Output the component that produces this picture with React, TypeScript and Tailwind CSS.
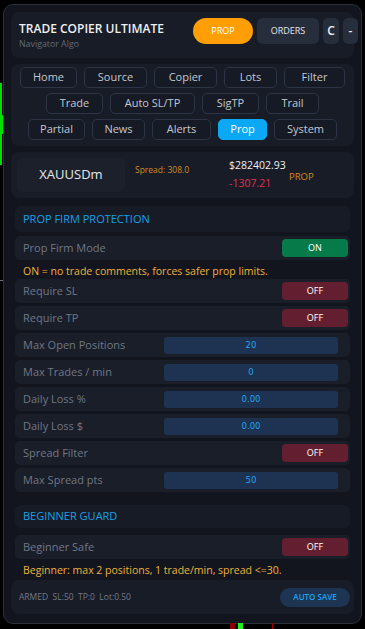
import React from "react";

type Tab = { label: string; w: string; active?: boolean };

const tabRows: Tab[][] = [
  [
    { label: "Home", w: "w-[57px]" },
    { label: "Source", w: "w-[63px]" },
    { label: "Copier", w: "w-[63px]" },
    { label: "Lots", w: "w-[53px]" },
    { label: "Filter", w: "w-[61px]" },
  ],
  [
    { label: "Trade", w: "w-[57px]" },
    { label: "Auto SL/TP", w: "w-[85px]" },
    { label: "SigTP", w: "w-[57px]" },
    { label: "Trail", w: "w-[53px]" },
  ],
  [
    { label: "Partial", w: "w-[57px]" },
    { label: "News", w: "w-[53px]" },
    { label: "Alerts", w: "w-[59px]" },
    { label: "Prop", w: "w-[49px]", active: true },
    { label: "System", w: "w-[63px]" },
  ],
];

function Toggle({ on }: { on: boolean }) {
  return (
    <div
      className={
        "flex h-[18px] w-[66px] items-center justify-center rounded-[4px] text-[9px] text-white " +
        (on ? "bg-[#077a4a]" : "bg-[#631f30]")
      }
    >
      {on ? "ON" : "OFF"}
    </div>
  );
}

function ToggleRow({ label, on }: { label: string; on: boolean }) {
  return (
    <div className="flex h-[24px] items-center justify-between rounded-[5px] bg-[#1a1e29] pl-[8px] pr-[2px]">
      <span className="text-[11px] text-[#6f7785]">{label}</span>
      <Toggle on={on} />
    </div>
  );
}

function InputRow({ label, value }: { label: string; value: string }) {
  return (
    <div className="flex h-[24px] items-center justify-between rounded-[5px] bg-[#1a1e29] pl-[8px] pr-[12px]">
      <span className="text-[11px] text-[#6f7785]">{label}</span>
      <div className="flex h-[17px] w-[174px] items-center justify-center rounded-[3px] bg-[#1e3251] font-['DejaVu_Sans',sans-serif] text-[8.5px] text-[#1fa3f0]">
        {value}
      </div>
    </div>
  );
}

function Note({ children }: { children: React.ReactNode }) {
  return (
    <div className="h-[13px] pl-[8px] text-[10.5px] leading-[17px] text-[#f0b13c]">{children}</div>
  );
}

export default function App() {
  return (
    <div className="relative h-[629px] w-[365px] overflow-hidden bg-black font-['Open_Sans',sans-serif]">
      {/* chart background fragments */}
      <div className="absolute left-0 top-[83px] h-[82px] w-[2px] bg-[#00e000]" />
      <div className="absolute left-0 top-[115px] h-[19px] w-[3px] bg-[#00e000]" />
      <div className="absolute left-0 top-[280px] h-[1px] w-[3px] bg-[#6b7280]" />
      <div className="absolute left-[230px] top-[623px] h-[6px] w-[5px] bg-[#8b0000]" />
      <div className="absolute left-[238px] top-[623px] h-[6px] w-[5px] bg-[#22ee22]" />
      <div className="absolute left-[272px] top-[623px] h-[6px] w-[1px] bg-[#a00000]" />

      <div className="ml-[3px] mt-[4px] flex h-[620px] w-[359px] flex-col rounded-[10px] border border-[#2a2f3a] bg-[#12151d] px-[7px] pt-[7px]">
        {/* header */}
        <div className="flex h-[46px] items-start justify-between rounded-[8px] bg-[#181c26] pl-[8px] pt-[6px]">
          <div className="pt-[3px]">
            <div className="text-[12px] font-semibold leading-[16px] text-[#eef0f3]">
              TRADE COPIER ULTIMATE
            </div>
            <div className="mt-[1px] text-[8.8px] leading-[12px] text-[#626a78]">Navigator Algo</div>
          </div>
          <div className="-mr-[4px] flex gap-[4px]">
            <div className="flex h-[26px] w-[60px] items-center justify-center rounded-[13px] bg-[#ff9f05] text-[9px] text-white">
              PROP
            </div>
            <div className="flex h-[26px] w-[62px] items-center justify-center rounded-[6px] bg-[#262d3b] text-[9px] text-[#e3e6eb]">
              ORDERS
            </div>
            <div className="flex h-[26px] w-[16px] items-center justify-center rounded-[5px] bg-[#262d3b] text-[12px] font-semibold text-[#eef0f3]">
              C
            </div>
            <div className="flex h-[26px] w-[15px] items-center justify-center rounded-[5px] bg-[#262d3b] text-[12px] font-semibold text-[#eef0f3]">
              -
            </div>
          </div>
        </div>

        {/* tabs */}
        <div className="mt-[6px] flex h-[82px] flex-col gap-[5px] rounded-[8px] bg-[#181c26] pt-[3px]">
          {tabRows.map((row, i) => (
            <div key={i} className="flex justify-center gap-[7px]">
              {row.map((t) => (
                <div
                  key={t.label}
                  className={
                    "flex h-[21px] items-center justify-center rounded-[5px] border text-[11px] " +
                    t.w +
                    " " +
                    (t.active
                      ? "border-[#0aa8f5] bg-[#0aa8f5] text-white"
                      : "border-[#2d3444] bg-[#161a24] text-[#c3c8d1]")
                  }
                >
                  {t.label}
                </div>
              ))}
            </div>
          ))}
        </div>

        {/* symbol */}
        <div className="mt-[6px] flex h-[46px] rounded-[8px] bg-[#181c26] p-[6px]">
          <div className="flex w-[108px] items-center justify-center rounded-[6px] bg-[#1c202b] text-[13px] font-medium text-[#e6e8ec]">
            XAUUSDm
          </div>
          <div className="w-[104px] pl-[10px] pt-[6px] text-[8.5px] leading-[12px] text-[#d4891c]">
            Spread: 308.0
          </div>
          <div className="flex w-[60px] flex-col gap-[4px]">
            <div className="text-[10.5px] leading-[14px] text-[#eef0f3]">$282402.93</div>
            <div className="text-[10.5px] leading-[14px] text-[#e0304e]">-1307.21</div>
          </div>
          <div className="pt-[12px] text-[9.5px] leading-[14px] text-[#d98a1a]">PROP</div>
        </div>

        {/* sections */}
        <div className="mt-[8px] flex flex-col gap-[3px] px-[4px]">
          <div className="mb-[1px] flex h-[26px] items-center rounded-[6px] bg-[#171b25] pl-[8px] text-[11px] text-[#17a0e6]">
            PROP FIRM PROTECTION
          </div>
          <ToggleRow label="Prop Firm Mode" on />
          <Note>ON = no trade comments, forces safer prop limits.</Note>
          <ToggleRow label="Require SL" on={false} />
          <ToggleRow label="Require TP" on={false} />
          <InputRow label="Max Open Positions" value="20" />
          <InputRow label="Max Trades / min" value="0" />
          <InputRow label="Daily Loss %" value="0.00" />
          <InputRow label="Daily Loss $" value="0.00" />
          <ToggleRow label="Spread Filter" on={false} />
          <InputRow label="Max Spread pts" value="50" />

          <div className="mb-[4px] mt-[10px] flex h-[23px] items-center rounded-[6px] bg-[#171b25] pl-[8px] text-[11px] text-[#17a0e6]">
            BEGINNER GUARD
          </div>
          <ToggleRow label="Beginner Safe" on={false} />
          <Note>Beginner: max 2 positions, 1 trade/min, spread &lt;=30.</Note>
        </div>

        {/* footer */}
        <div className="mt-[5px] flex h-[34px] items-center justify-between rounded-[8px] bg-[#181c26] pl-[8px] pr-[4px]">
          <span className="text-[8.5px] text-[#737a88]">ARMED&nbsp; SL:50&nbsp; TP:0&nbsp; Lot:0.50</span>
          <div className="flex h-[19px] w-[70px] items-center justify-center rounded-full bg-[#1d3453] text-[8px] font-semibold text-[#1ea5ee]">
            AUTO SAVE
          </div>
        </div>
      </div>
    </div>
  );
}
